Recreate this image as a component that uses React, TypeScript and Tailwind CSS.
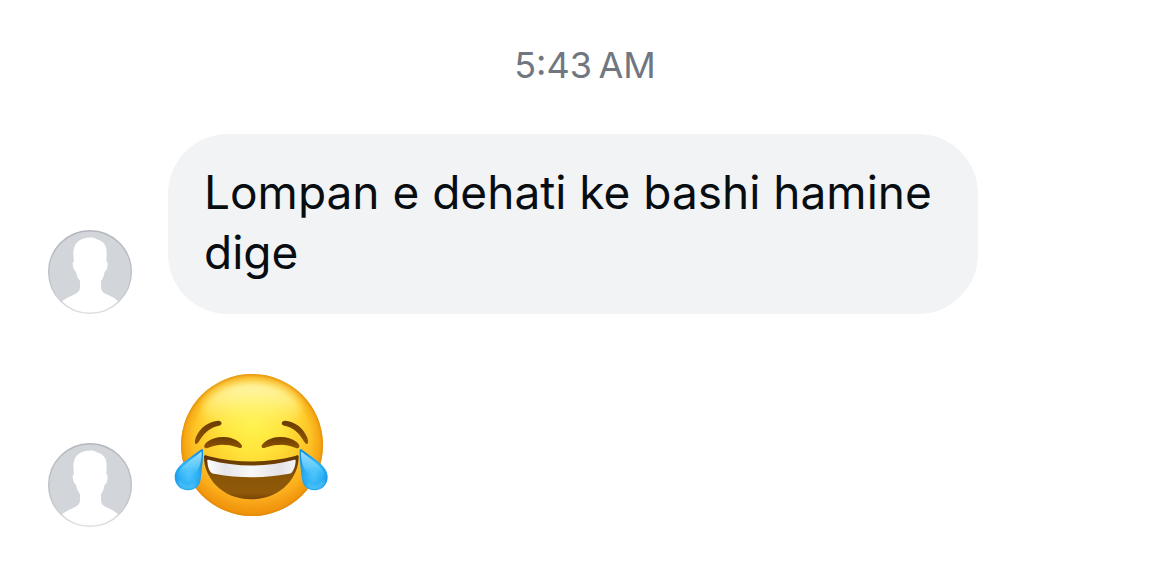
import React from 'react';

function Avatar() {
  return (
    <svg viewBox="0 0 84 84" className="size-21 shrink-0" role="img" aria-label="Profile photo">
      <defs>
        <clipPath id="avatar-clip">
          <circle cx="42" cy="42" r="41.5" />
        </clipPath>
        <linearGradient id="avatar-ring" x1="0" y1="0" x2="0" y2="1">
          <stop offset="0" stopColor="#b3b7bd" />
          <stop offset="0.7" stopColor="#c2c5ca" />
          <stop offset="1" stopColor="#dedfe1" />
        </linearGradient>
      </defs>
      <g clipPath="url(#avatar-clip)">
        <rect width="84" height="84" fill="#d2d5da" />
        <path
          d="M42 7.500C45 7.500 47.500 8 49 9.400C55 10.500 58.600 15 58.600 22C58.700 25 58.500 28 58.300 31.200C60 31.700 59.900 34.500 59.200 37.500C58.600 40 57.800 41.500 56.600 41.800C56 46 55 48.500 53 51V57.500C53.400 60.800 54.800 62.500 57.500 63.700C62.500 66 66.500 68 69.500 70.700L78 90H6L14.700 70.700C18.500 67.800 23 66 27.500 63.700C30.300 62.300 31.800 60.800 32 57.500V51C30 48.500 28.600 46 28 41.800C27 41.500 26 40 25.300 37.500C24.400 34.500 24.300 31.700 26 31.200C25.300 26.500 25 22.500 25.900 18.500C28 11 34 7.500 42 7.500Z"
          fill="#fff"
        />
      </g>
      <circle cx="42" cy="42" r="41.3" fill="none" stroke="url(#avatar-ring)" strokeWidth="1.4" />
    </svg>
  );
}

function JoyEmoji() {
  return (
    <svg viewBox="24 39 468 432" className="h-36 w-39 shrink-0" role="img" aria-label="Face with tears of joy">
      <defs>
        <radialGradient id="face" gradientUnits="userSpaceOnUse" cx="262" cy="195" r="275">
          <stop offset="0" stopColor="#fff24c" />
          <stop offset="0.3" stopColor="#ffe53c" />
          <stop offset="0.58" stopColor="#fecb2a" />
          <stop offset="0.8" stopColor="#fbae1c" />
          <stop offset="1" stopColor="#ee8a0c" />
        </radialGradient>
        <radialGradient id="edge" gradientUnits="userSpaceOnUse" cx="261" cy="255" r="213">
          <stop offset="0.84" stopColor="#f19a08" stopOpacity="0" />
          <stop offset="0.95" stopColor="#f19a08" stopOpacity="0.45" />
          <stop offset="1" stopColor="#e08808" stopOpacity="0.85" />
        </radialGradient>
        <linearGradient id="shine" x1="0" y1="0" x2="0" y2="1">
          <stop offset="0" stopColor="#fffbd0" stopOpacity="0.85" />
          <stop offset="0.4" stopColor="#fffa9d" stopOpacity="0.6" />
          <stop offset="1" stopColor="#fff04c" stopOpacity="0" />
        </linearGradient>
        <linearGradient id="brow" x1="0" y1="0" x2="0" y2="1">
          <stop offset="0" stopColor="#6c3b02" />
          <stop offset="1" stopColor="#8f5504" />
        </linearGradient>
        <linearGradient id="mouth" x1="0" y1="0" x2="0" y2="1">
          <stop offset="0" stopColor="#5f3202" />
          <stop offset="0.5" stopColor="#8a5606" />
          <stop offset="0.85" stopColor="#90590a" />
          <stop offset="1" stopColor="#784405" />
        </linearGradient>
        <linearGradient id="teeth" x1="0" y1="0" x2="1" y2="0">
          <stop offset="0" stopColor="#ffffff" />
          <stop offset="0.2" stopColor="#e6e6ea" />
          <stop offset="0.5" stopColor="#f7f7f9" />
          <stop offset="0.82" stopColor="#e3e3e8" />
          <stop offset="1" stopColor="#f5f5f7" />
        </linearGradient>
        <radialGradient id="tear" cx="0.5" cy="0.62" r="0.6">
          <stop offset="0" stopColor="#4cc4fb" />
          <stop offset="0.55" stopColor="#2baef4" />
          <stop offset="1" stopColor="#118fe4" />
        </radialGradient>
        <linearGradient id="tear-top" x1="0" y1="0" x2="0" y2="1">
          <stop offset="0" stopColor="#b5eeff" stopOpacity="0.9" />
          <stop offset="0.55" stopColor="#7fdcff" stopOpacity="0.6" />
          <stop offset="1" stopColor="#3bbcff" stopOpacity="0" />
        </linearGradient>
        <filter id="soft" x="-20%" y="-20%" width="140%" height="140%">
          <feGaussianBlur stdDeviation="5" />
        </filter>
        <filter id="softer" x="-20%" y="-30%" width="140%" height="160%">
          <feGaussianBlur stdDeviation="13" />
        </filter>
      </defs>

      <circle cx="261" cy="255" r="213" fill="url(#face)" />
      <circle cx="261" cy="255" r="213" fill="url(#edge)" />
      <ellipse cx="261" cy="147" rx="146" ry="80" fill="url(#shine)" filter="url(#softer)" />

      {/* eyebrows and closed eyes */}
      <g fill="url(#brow)">
        <path d="M94 252C88 253 89 241 93 231C105 202 132 184 160 182C172 182 173 195 162 197C137 202 119 217 106 238C101 247 98 251 94 252Z" />
        <path d="M121 264C114 261 119 252 126 246C141 234 160 230 178 231C203 232 224 243 231 257C233 264 224 266 217 262C202 256 187 254 169 254C151 255 139 259 128 264C125 265 123 265 121 264Z" />
      </g>
      <g fill="url(#brow)" transform="translate(521 0) scale(-1 1)">
        <path d="M96 252C90 253 91 241 95 231C107 202 133 184 161 182C173 182 174 195 163 197C138 202 120 217 108 238C103 247 100 251 96 252Z" />
        <path d="M121 264C114 261 119 252 126 246C141 234 160 230 178 231C203 232 224 243 231 257C233 264 224 266 217 262C202 256 187 254 169 254C151 255 139 259 128 264C125 265 123 265 121 264Z" />
      </g>

      <path d="M117 291C117 283 123 286 131 289C212 310 306 310 388 289C396 286 401 283 401 291C401 350 350 418 259 418C168 418 117 350 117 291Z" fill="url(#mouth)" />
      <path d="M127 304C125 300 128 298 133 300C214 322 304 322 385 300C390 298 393 300 392 304C391 316 388 328 382 335C379 340 374 341 368 342C297 355 222 355 151 342C145 341 140 340 136 335C130 328 128 316 127 304Z" fill="url(#teeth)" />

      <path d="M109 268C95 279 75 292 62 302C40 318 29 333 29 351C29 374 47 391 69 391C90 391 104 379 107 358C110 338 115 295 114 270C113 267 111 266 109 268Z" fill="url(#tear)" />
      <path d="M107 276C95 286 77 299 65 309C49 321 41 333 39 346C49 364 78 351 94 336C105 323 111 294 110 278C110 275 109 274 107 276Z" fill="url(#tear-top)" />
      <path d="M43 366C50 384 74 390 89 374" fill="none" stroke="#70d7ff" strokeWidth="7" strokeLinecap="round" opacity="0.6" filter="url(#soft)" />
      <path d="M409 268C423 279 443 292 456 302C477 318 488 333 488 351C488 374 471 391 449 391C428 391 414 379 411 358C408 338 403 295 404 270C405 267 407 266 409 268Z" fill="url(#tear)" />
      <path d="M411 276C423 286 441 299 453 309C468 321 476 333 478 346C468 364 440 351 424 336C413 323 407 294 408 278C408 275 409 274 411 276Z" fill="url(#tear-top)" />
      <path d="M475 366C468 384 444 390 429 374" fill="none" stroke="#70d7ff" strokeWidth="7" strokeLinecap="round" opacity="0.6" filter="url(#soft)" />
    </svg>
  );
}

function Message({ children }: { children: React.ReactNode }) {
  return (
    <div className="flex items-end gap-9">
      <Avatar />
      {children}
    </div>
  );
}

export default function App() {
  return (
    <main className="min-h-screen bg-white px-12 pt-10 pb-10 font-['Inter','Liberation_Sans',sans-serif]">
      <time className="block text-center text-[36px] leading-[50px] text-[#717780]">{'5:43\u202fAM'}</time>
      <div className="mt-11 flex flex-col gap-[59px]">
        <Message>
          <p className="max-w-[810px] rounded-[60px] bg-[#f2f3f5] px-9 pt-7 pb-8 text-[46px] leading-[60px] text-[#080d12]">
            Lompan e dehati ke bashi hamine dige
          </p>
        </Message>
        <Message>
          <div className="pb-[10px] pl-[5px]">
            <JoyEmoji />
          </div>
        </Message>
      </div>
    </main>
  );
}
